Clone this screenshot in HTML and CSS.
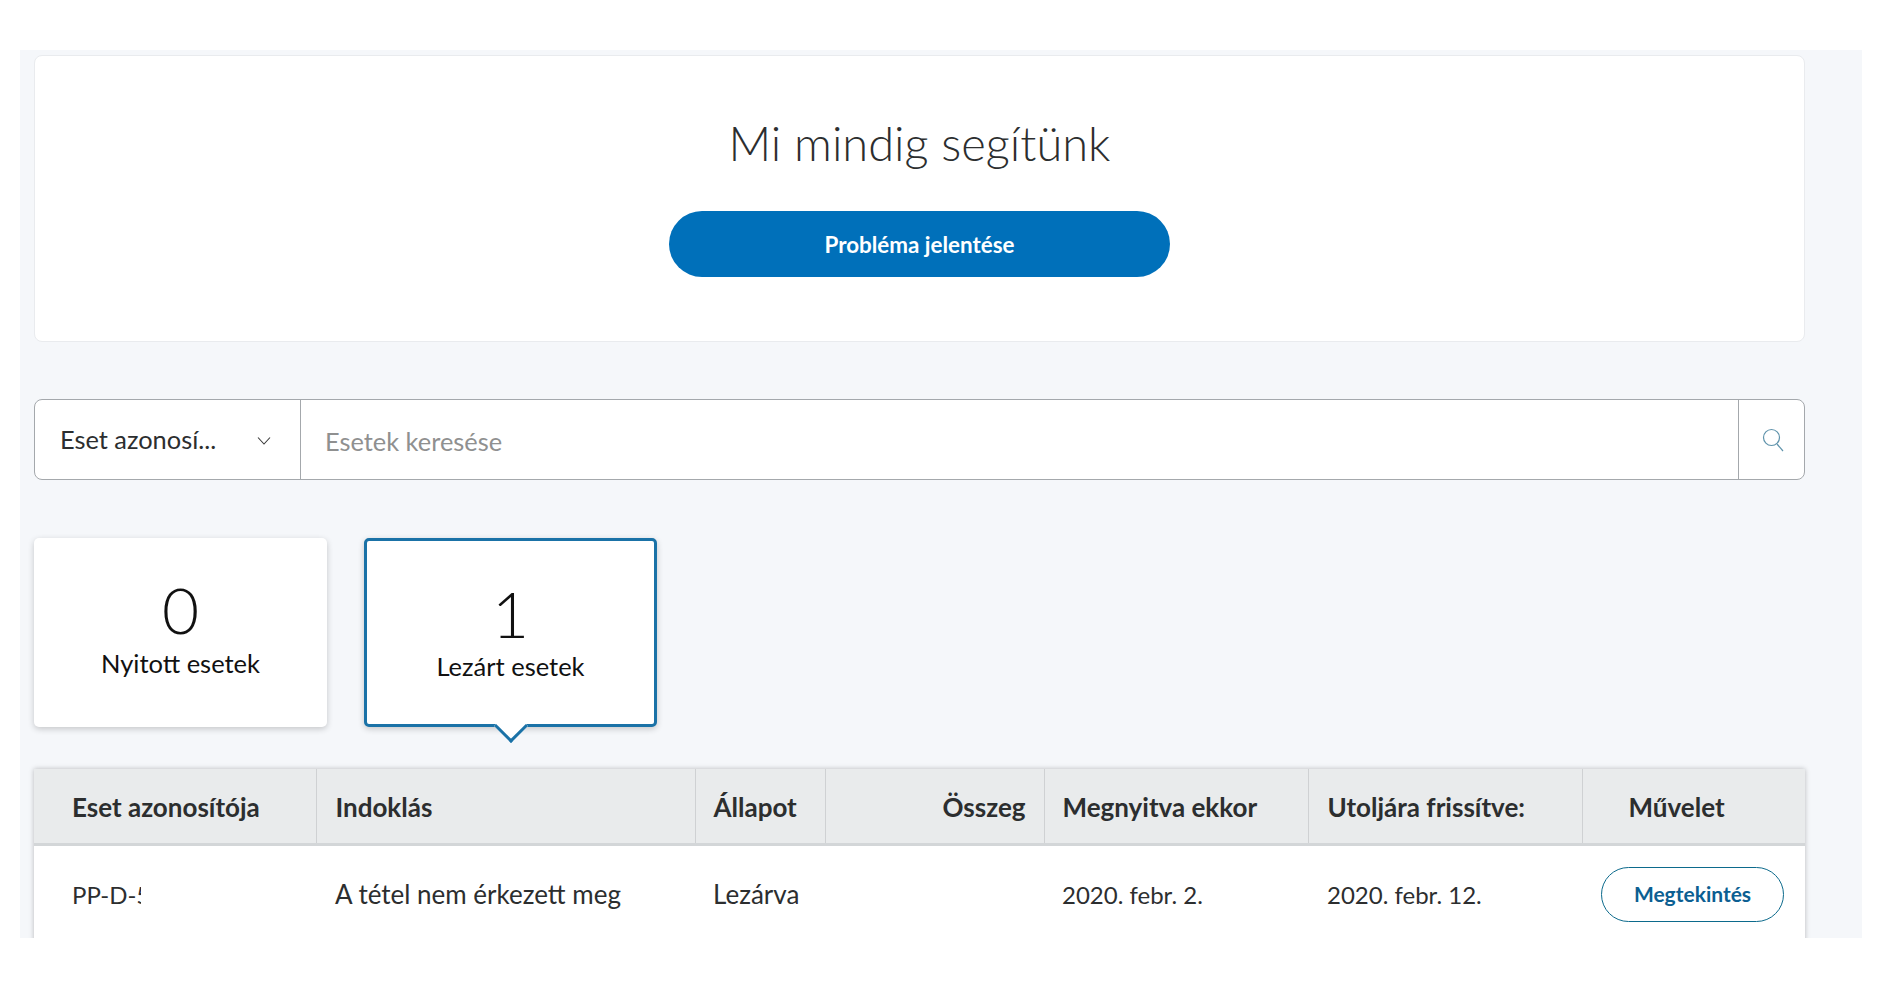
FILE: index.html
```html
<!DOCTYPE html>
<html lang="hu">
<head>
    <meta charset="UTF-8">
    <title>Mi mindig segítünk</title>
    <link rel="stylesheet" href="styles.css">
</head>
<body>
    <div class="panel">
        <section class="help-card">
            <h1 class="help-title">Mi mindig segítünk</h1>
            <a class="report-button" href="#">Probléma jelentése</a>
        </section>

        <form class="search-bar">
            <div class="search-select">
                <span>Eset azonosí...</span>
                <svg class="chevron" width="16" height="10" viewBox="0 0 16 10"><path d="M2 1.5 L8 8 L14 1.5" fill="none" stroke="#3a3a3a" stroke-width="1.1"/></svg>
            </div>
            <input class="search-input" type="text" placeholder="Esetek keresése">
            <div class="search-icon">
                <svg width="24" height="26" viewBox="0 0 24 26"><circle cx="10.5" cy="10.5" r="8" fill="none" stroke="#5f93ab" stroke-width="1.2"/><path d="M16 17 L22 24" fill="none" stroke="#5f93ab" stroke-width="1.2"/></svg>
            </div>
        </form>

        <div class="stats">
            <div class="stat-card">
                <div class="stat-number">0</div>
                <div class="stat-label">Nyitott esetek</div>
            </div>
            <div class="stat-card stat-card-active">
                <div class="stat-number">1</div>
                <div class="stat-label">Lezárt esetek</div>
            </div>
        </div>

        <table class="cases">
            <colgroup>
                <col class="col-id"><col class="col-reason"><col class="col-status"><col class="col-amount"><col class="col-opened"><col class="col-updated"><col class="col-action">
            </colgroup>
            <thead>
                <tr>
                    <th class="cell-id">Eset azonosítója</th>
                    <th class="cell-nudge">Indoklás</th>
                    <th>Állapot</th>
                    <th class="cell-amount">Összeg</th>
                    <th>Megnyitva ekkor</th>
                    <th class="cell-nudge">Utoljára frissítve:</th>
                    <th class="cell-action">Művelet</th>
                </tr>
            </thead>
            <tbody>
                <tr>
                    <td class="cell-id"><span class="case-id">PP-D-5</span></td>
                    <td class="cell-nudge">A tétel nem érkezett meg</td>
                    <td>Lezárva</td>
                    <td></td>
                    <td class="cell-date">2020. febr. 2.</td>
                    <td class="cell-date cell-nudge">2020. febr. 12.</td>
                    <td class="cell-view"><a class="view-button" href="#">Megtekintés</a></td>
                </tr>
                <tr class="row-spacer"><td colspan="7"></td></tr>
            </tbody>
        </table>
    </div>
</body>
</html>
```

FILE: styles.css
```css
body {
    margin: 0;
    background: #fff;
    color: #2c2e2f;
    font-family: 'Lato', 'Noto Sans', sans-serif;
}

/* Grey page area, the screenshot cuts it off at the bottom */
.panel {
    height: 888px;
    margin: 50px 25px 0 20px;
    padding: 5px 57px 0 14px;
    box-sizing: border-box;
    background: #f5f7fa;
    overflow: hidden;
}

.help-card {
    height: 287px;
    box-sizing: border-box;
    padding-top: 57px;
    background: #fff;
    border: 1px solid #e9ebee;
    border-radius: 8px;
    text-align: center;
}

.help-title {
    margin: 0 0 38px;
    font-size: 47px;
    line-height: 60px;
    font-weight: 300;
}

.report-button {
    display: inline-block;
    width: 501px;
    height: 66px;
    line-height: 68px;
    border-radius: 33px;
    background: #0070ba;
    color: #fff;
    font-size: 22.4px;
    font-weight: 700;
    text-decoration: none;
}

/* Search row */
.search-bar {
    display: flex;
    height: 81px;
    box-sizing: border-box;
    margin-top: 57px;
    background: #fff;
    border: 1px solid #a4a8ac;
    border-radius: 8px;
}

.search-select {
    display: flex;
    align-items: center;
    justify-content: space-between;
    width: 266px;
    box-sizing: border-box;
    padding: 0 28px 2px 25px;
    border-right: 1px solid #a4a8ac;
    font-size: 25.4px;
}

.chevron {
    margin-top: 4px;
}

.search-input {
    flex: 1;
    min-width: 0;
    padding: 3px 0 0 24px;
    border: 0;
    background: transparent;
    font-family: inherit;
    font-size: 25.4px;
    outline: none;
}

.search-input::placeholder {
    color: #8f9090;
    opacity: 1;
}

.search-icon {
    display: flex;
    align-items: center;
    justify-content: center;
    width: 66px;
    box-sizing: border-box;
    padding-left: 3px;
    border-left: 1px solid #a4a8ac;
}

/* Number cards */
.stats {
    display: flex;
    gap: 37px;
    margin-top: 58px;
}

.stat-card {
    position: relative;
    width: 293px;
    height: 189px;
    box-sizing: border-box;
    padding-top: 40px;
    background: #fff;
    border-radius: 5px;
    box-shadow: 0 2px 6px rgba(0, 0, 0, 0.2);
    color: #111;
    text-align: center;
}

.stat-card-active {
    padding-top: 41px;
    border: 3px solid #1a72a7;
}

.stat-card-active::after {
    content: "";
    position: absolute;
    left: 50%;
    bottom: -14px;
    width: 24px;
    height: 24px;
    margin-left: -12px;
    background: #fff;
    border-right: 3px solid #1a72a7;
    border-bottom: 3px solid #1a72a7;
    box-sizing: border-box;
    transform: rotate(45deg);
}

.stat-number {
    font-size: 64px;
    line-height: 64px;
    font-weight: 300;
}

.stat-label {
    margin-top: 5px;
    font-size: 25.5px;
    line-height: 32px;
}

.stat-card-active .stat-label {
    margin-top: 4px;
}

/* Table */
.cases {
    width: 1771px;
    margin-top: 42px;
    border-collapse: collapse;
    table-layout: fixed;
    background: #fff;
    box-shadow: 0 0 5px rgba(0, 0, 0, 0.25);
    font-size: 26px;
}

.col-id { width: 282px; }
.col-reason { width: 379px; }
.col-status { width: 130px; }
.col-amount { width: 219px; }
.col-opened { width: 264px; }
.col-updated { width: 274px; }
.col-action { width: 223px; }

.cases th {
    height: 72px;
    padding: 2px 0 0 18px;
    background: #e9ebec;
    border-left: 1px solid #cfd1d3;
    border-bottom: 3px solid #d3d6d8;
    font-weight: 700;
    text-align: left;
}

.cases th:first-child {
    border-left: 0;
}

.cases .cell-amount {
    padding: 2px 18px 0 0;
    text-align: right;
}

.cases .cell-action {
    padding-left: 46px;
}

.cases td {
    height: 96px;
    padding: 0 0 14px 18px;
}

.cases .cell-id {
    padding-left: 38px;
}

.cases .cell-nudge {
    padding-left: 19px;
}

.cases .cell-date {
    font-size: 24px;
}

.case-id {
    display: inline-block;
    width: 69px;
    margin-bottom: 2px;
    overflow: hidden;
    font-size: 24px;
    vertical-align: middle;
    white-space: nowrap;
}

.cases .cell-view {
    padding: 0 0 14px 19px;
}

.view-button {
    display: block;
    width: 183px;
    height: 55px;
    box-sizing: border-box;
    border: 1px solid #0c6a8c;
    border-radius: 28px;
    color: #0c5f92;
    font-size: 21px;
    font-weight: 700;
    line-height: 52px;
    text-align: center;
    text-decoration: none;
}

.row-spacer td {
    height: 40px;
}
```
